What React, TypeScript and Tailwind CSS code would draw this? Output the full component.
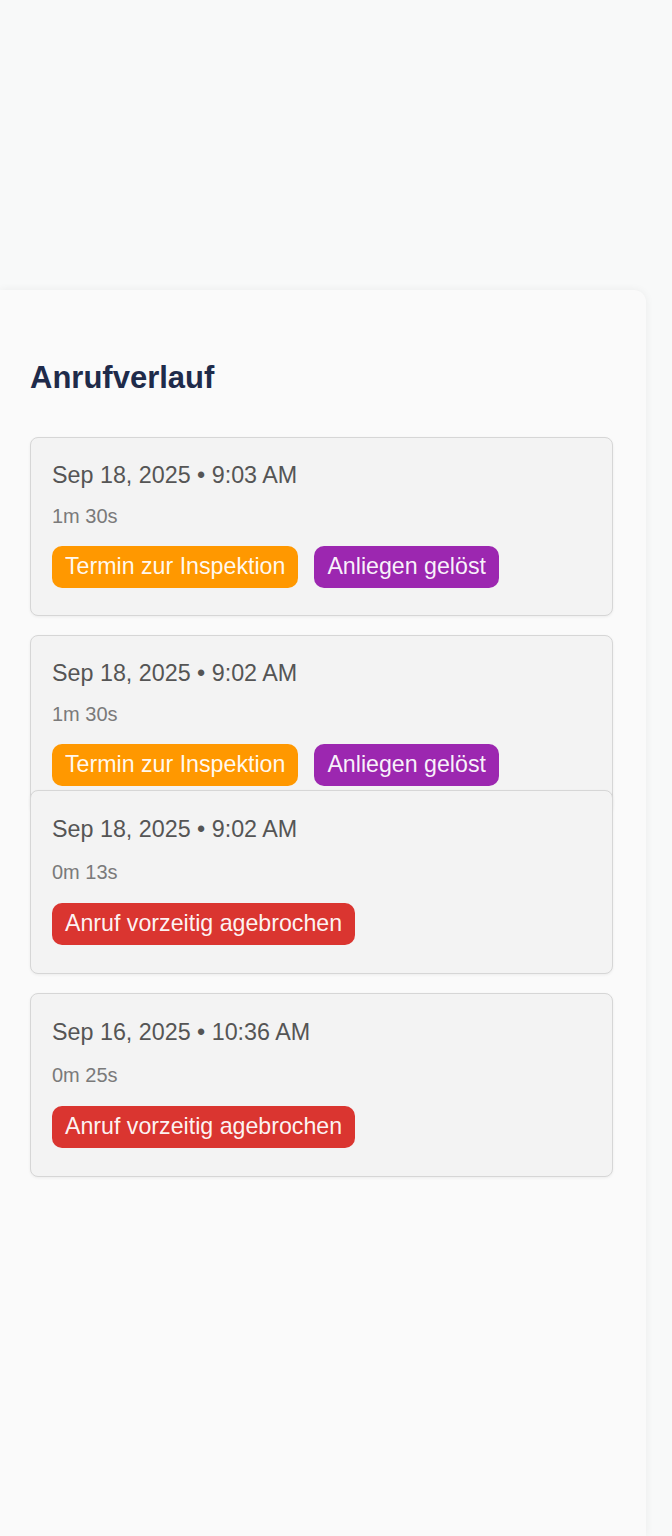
import React from "react";

type Badge = { label: string; color: string };
type Call = { date: string; duration: string; badges: Badge[]; variant?: "overlap" | "tall" };

const calls: Call[] = [
  {
    date: "Sep 18, 2025 • 9:03 AM",
    duration: "1m 30s",
    badges: [
      { label: "Termin zur Inspektion", color: "orange" },
      { label: "Anliegen gelöst", color: "purple" },
    ],
  },
  {
    date: "Sep 18, 2025 • 9:02 AM",
    duration: "1m 30s",
    badges: [
      { label: "Termin zur Inspektion", color: "orange" },
      { label: "Anliegen gelöst", color: "purple" },
    ],
  },
  {
    date: "Sep 18, 2025 • 9:02 AM",
    duration: "0m 13s",
    badges: [{ label: "Anruf vorzeitig agebrochen", color: "red" }],
    variant: "overlap",
  },
  {
    date: "Sep 16, 2025 • 10:36 AM",
    duration: "0m 25s",
    badges: [{ label: "Anruf vorzeitig agebrochen", color: "red" }],
    variant: "tall",
  },
];

function BadgePill({ b }: { b: Badge }) {
  const bg =
    b.color === "orange"
      ? "bg-[#ff9800]"
      : b.color === "purple"
      ? "bg-[#9c27b0]"
      : "bg-[#da3530]";
  return (
    <span
      className={`${bg} inline-flex h-[42px] items-center rounded-[10px] px-[13px] text-[23.2px] leading-none text-white/95`}
    >
      {b.label}
    </span>
  );
}

function CallCard({ c }: { c: Call }) {
  const tall = c.variant === "overlap" || c.variant === "tall";
  return (
    <div
      className={`relative rounded-[8px] border border-[#d6d6d6] bg-[#f3f3f3] px-[21px] shadow-[0_1px_3px_rgba(0,0,0,0.06)] ${
        c.variant === "overlap" ? "-mt-[43px]" : ""
      } ${tall ? "pt-[23px] pb-[28px]" : "pt-[22px] pb-[27px]"}`}
    >
      <div className="text-[23.3px] leading-[30px] text-[#555555]">{c.date}</div>
      <div className={`${tall ? "mt-[16px]" : "mt-[14px]"} text-[20px] leading-[24px] text-[#7a7a7a]`}>
        {c.duration}
      </div>
      <div className={`${tall ? "mt-[19px]" : "mt-[18px]"} flex gap-[16px]`}>
        {c.badges.map((b, i) => (
          <BadgePill key={i} b={b} />
        ))}
      </div>
    </div>
  );
}

export default function App() {
  return (
    <div
      className="min-h-[1536px] w-[672px] bg-[#f8f9f9] pt-[290px]"
      style={{ fontFamily: '"Liberation Sans", Arial, sans-serif' }}
    >
      <div className="min-h-[1246px] w-[646px] rounded-tr-[12px] bg-[#fafafa] pl-[30px] pr-[33px] pt-[70px] shadow-[0_0_8px_rgba(0,0,0,0.06)]">
        <h2 className="text-[31px] font-bold leading-[36px] text-[#1f2b4a]">Anrufverlauf</h2>
        <div className="mt-[41px] flex flex-col gap-[19px]">
          {calls.map((c, i) => (
            <CallCard key={i} c={c} />
          ))}
        </div>
      </div>
    </div>
  );
}
